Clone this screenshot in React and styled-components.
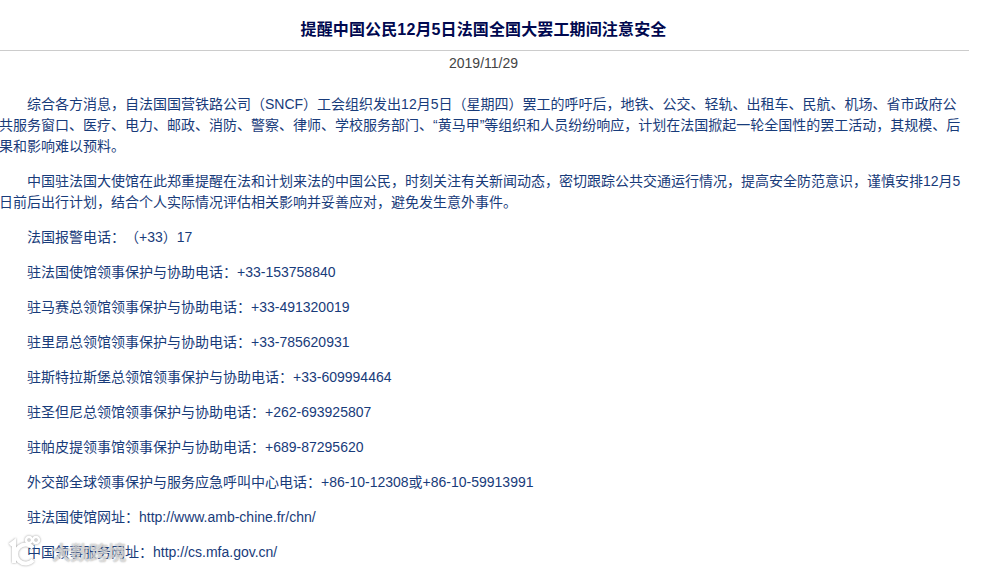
import React from "react";
import styled, { createGlobalStyle } from "styled-components";

const Global = createGlobalStyle`
  html, body { margin: 0; padding: 0; background: #fff; overflow: hidden; }
`;

const FONT = `"Liberation Sans", "Noto Sans CJK SC", sans-serif`;

const Page = styled.div`
  position: relative;
  width: 996px;
  height: 569px;
  overflow: hidden;
  font-family: ${FONT};
  text-spacing-trim: space-all;
`;

const Article = styled.article`
  width: 969px;
`;

const Title = styled.h1`
  margin: 0;
  height: 51px;
  padding-right: 2px;
  line-height: 59px;
  box-sizing: border-box;
  border-bottom: 1px solid #cccccc;
  text-align: center;
  font-size: 16px;
  font-weight: 700;
  letter-spacing: 0.13px;
  color: #00084f;
`;

const DateLine = styled.div`
  height: 24px;
  padding-right: 2px;
  line-height: 24px;
  text-align: center;
  font-size: 14px;
  color: #444;
`;

const Body = styled.div`
  padding-top: 19px;
  margin-left: -1px;
  width: 962px;
`;

const Para = styled.p`
  margin: 0 0 14px;
  font-size: 14px;
  line-height: 21px;
  text-indent: 28px;
  color: #183b7a;
`;

const Watermark = styled.div`
  position: absolute;
  left: 8px;
  top: 533px;
  display: flex;
  align-items: flex-end;
  gap: 8px;
  height: 34px;
  pointer-events: none;
`;

const WatermarkLogo = styled.svg`
  filter: drop-shadow(0 0 1px rgba(130, 130, 130, 0.8));
`;

const WatermarkText = styled.span`
  font-size: 19px;
  line-height: 26px;
  font-weight: 700;
  letter-spacing: -0.5px;
  color: rgba(255, 255, 255, 0.55);
  text-shadow: 0 0 1.5px rgba(120, 120, 120, 0.75);
`;

const paragraphs = [
  "综合各方消息，自法国国营铁路公司（SNCF）工会组织发出12月5日（星期四）罢工的呼吁后，地铁、公交、轻轨、出租车、民航、机场、省市政府公共服务窗口、医疗、电力、邮政、消防、警察、律师、学校服务部门、“黄马甲”等组织和人员纷纷响应，计划在法国掀起一轮全国性的罢工活动，其规模、后果和影响难以预料。",
  "中国驻法国大使馆在此郑重提醒在法和计划来法的中国公民，时刻关注有关新闻动态，密切跟踪公共交通运行情况，提高安全防范意识，谨慎安排12月5日前后出行计划，结合个人实际情况评估相关影响并妥善应对，避免发生意外事件。",
  "法国报警电话：（+33）17",
  "驻法国使馆领事保护与协助电话：+33-153758840",
  "驻马赛总领馆领事保护与协助电话：+33-491320019",
  "驻里昂总领馆领事保护与协助电话：+33-785620931",
  "驻斯特拉斯堡总领馆领事保护与协助电话：+33-609994464",
  "驻圣但尼总领馆领事保护与协助电话：+262-693925807",
  "驻帕皮提领事馆领事保护与协助电话：+689-87295620",
  "外交部全球领事保护与服务应急呼叫中心电话：+86-10-12308或+86-10-59913991",
  "驻法国使馆网址：http://www.amb-chine.fr/chn/",
  "中国领事服务网址：http://cs.mfa.gov.cn/",
];

export default function App() {
  return (
    <Page>
      <Global />
      <Article>
        <Title>提醒中国公民12月5日法国全国大罢工期间注意安全</Title>
        <DateLine>2019/11/29</DateLine>
        <Body>
          {paragraphs.map((p) => (
            <Para key={p}>{p}</Para>
          ))}
        </Body>
      </Article>
      <Watermark>
        <WatermarkLogo width="36" height="34" viewBox="0 0 36 34" fill="none" stroke="#ffffff">
          <path d="M2 12 L6 9 V30" strokeWidth="4" />
          <path d="M25 15 A9.5 9.5 0 1 0 25 27" strokeWidth="4" />
          <circle cx="21" cy="7" r="3" strokeWidth="2.5" />
          <circle cx="28" cy="7" r="3" strokeWidth="2.5" />
        </WatermarkLogo>
        <WatermarkText>大数跨境</WatermarkText>
      </Watermark>
    </Page>
  );
}
